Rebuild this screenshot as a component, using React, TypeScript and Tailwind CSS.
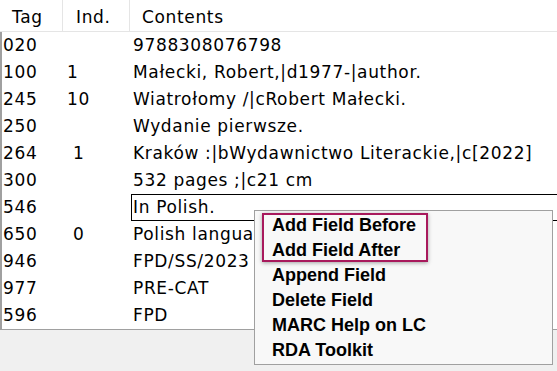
import React from 'react';

interface MarcRow {
  tag: string;
  ind: string;
  contents: string;
}

const rows: MarcRow[] = [
  { tag: '020', ind: '', contents: '9788308076798' },
  { tag: '100', ind: '1', contents: 'Małecki, Robert,|d1977-|author.' },
  { tag: '245', ind: '10', contents: 'Wiatrołomy /|cRobert Małecki.' },
  { tag: '250', ind: '', contents: 'Wydanie pierwsze.' },
  { tag: '264', ind: ' 1', contents: 'Kraków :|bWydawnictwo Literackie,|c[2022]' },
  { tag: '300', ind: '', contents: '532 pages ;|c21 cm' },
  { tag: '546', ind: '', contents: 'In Polish.' },
  { tag: '650', ind: ' 0', contents: 'Polish language' },
  { tag: '946', ind: '', contents: 'FPD/SS/2023' },
  { tag: '977', ind: '', contents: 'PRE-CAT' },
  { tag: '596', ind: '', contents: 'FPD' },
];

const menuItems = [
  'Add Field Before',
  'Add Field After',
  'Append Field',
  'Delete Field',
  'MARC Help on LC',
  'RDA Toolkit',
];

export default function App() {
  const focused = 6;

  return (
    <div className="relative w-[557px] h-[371px] overflow-hidden bg-[#f0f0f0] text-black">
      {/* grid */}
      <div className="w-[600px] font-['DejaVu_Sans',Verdana,sans-serif] text-[17px] tracking-[0.65px]">
        <div className="flex h-[32px] bg-white border-b border-[#e5e5e5]">
          <div className="w-[63px] border-r border-[#e5e5e5] pl-[12px] pt-[5px]">Tag</div>
          <div className="w-[67px] border-r border-[#e5e5e5] pl-[13px] pt-[5px]">Ind.</div>
          <div className="flex-1 pl-[12px] pt-[5px]">Contents</div>
        </div>
        <div className="bg-white border-l-2 border-b border-[#a0a0a0]">
          {rows.map((r, i) => (
            <div key={r.tag + i} className="flex h-[27px] items-center whitespace-pre">
              <div className="w-[65px] pl-[1px]">{r.tag}</div>
              <div className="w-[64px]">{r.ind}</div>
              <div
                className={
                  i === focused
                    ? 'flex-1 h-full flex items-center border border-black pl-[1px]'
                    : 'flex-1 pl-[2px]'
                }
              >
                {r.contents}
              </div>
            </div>
          ))}
        </div>
      </div>

      {/* context menu */}
      <div className="absolute left-[254px] top-[210px] w-[299px] h-[155px] bg-[#f8f8f8] border border-[#a0a0a0] pt-[2px] font-['Liberation_Sans',Arial,sans-serif] font-bold text-[18px]">
        {menuItems.map((m) => (
          <div key={m} className="h-[25px] flex items-center pl-[17px]">
            {m}
          </div>
        ))}
      </div>
      <div className="absolute left-[262px] top-[213px] w-[166px] h-[49px] border-2 border-[#a8195c] shadow-[0_1px_4px_rgba(0,0,0,0.35)]" />
    </div>
  );
}
